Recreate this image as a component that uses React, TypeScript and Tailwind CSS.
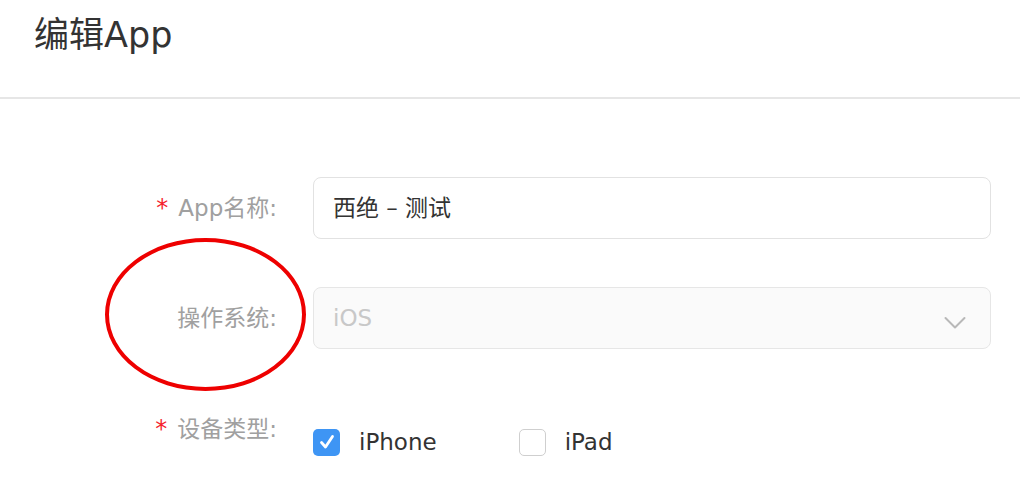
const font = {
  fontFamily: '"DejaVu Sans", "Noto Sans CJK SC", sans-serif',
};

function Checkbox({ checked }: { checked: boolean }) {
  return checked ? (
    <span className="flex h-[27px] w-[27px] items-center justify-center rounded-[5px] bg-[#3e95f4]">
      <svg width="18" height="18" viewBox="0 0 18 18" fill="none">
        <path d="M3.5 9.5 L7.5 14 L14.5 3.5" stroke="white" strokeWidth="2.8" strokeLinecap="round" strokeLinejoin="round" />
      </svg>
    </span>
  ) : (
    <span className="block h-[27px] w-[27px] rounded-[5px] border-[1.5px] border-[#cfcfcf] bg-white" />
  );
}

export default function App() {
  return (
    <div className="relative h-[480px] w-[1020px] overflow-hidden bg-white" style={font}>
      {/* Header */}
      <header className="h-[97px] pl-[34px] pt-[12px]">
        <h1 className="text-[35px] leading-[46px] text-[#333]">编辑App</h1>
      </header>
      <div className="h-[2px] bg-[#e6e6e6]" />

      {/* Form */}
      <div className="flex flex-col pt-[78px] pr-[29px]">
        <div className="flex items-center">
          <label className="w-[277px] shrink-0 text-right text-[23px] text-[#a0a0a0]">
            <span className="mr-[10px] text-[24px] text-[#f5222d]">*</span>App名称:
          </label>
          <div className="ml-[36px] flex h-[62px] flex-1 items-center rounded-[8px] border-[1.5px] border-[#e2e2e2] px-[19px] text-[23px] text-[#333]">
            西绝 – 测试
          </div>
        </div>

        <div className="mt-[48px] flex items-center">
          <label className="w-[277px] shrink-0 text-right text-[23px] text-[#a0a0a0]">操作系统:</label>
          <div className="ml-[36px] flex h-[62px] flex-1 items-center justify-between rounded-[8px] border-[1.5px] border-[#e6e6e6] bg-[#fafafa] pl-[19px] pr-[24px] text-[23px] text-[#c8c8c8]">
            <span>iOS</span>
            <svg width="22" height="14" viewBox="0 0 22 14" fill="none" className="mt-[10px]">
              <path d="M1.5 2 L11 11.5 L20.5 2" stroke="#b8b8b8" strokeWidth="2" strokeLinecap="round" strokeLinejoin="round" />
            </svg>
          </div>
        </div>

        <div className="mt-[66px] flex items-start">
          <label className="w-[277px] shrink-0 text-right text-[23px] leading-[28px] text-[#a0a0a0]">
            <span className="mr-[10px] text-[24px] text-[#f5222d]">*</span>设备类型:
          </label>
          <div className="ml-[36px] mt-[10px] flex items-center">
            <Checkbox checked />
            <span className="ml-[19px] text-[23px] text-[#333]">iPhone</span>
            <span className="ml-[82px]">
              <Checkbox checked={false} />
            </span>
            <span className="ml-[19px] text-[23px] text-[#333]">iPad</span>
          </div>
        </div>
      </div>

      {/* annotation */}
      <div className="pointer-events-none absolute left-[105px] top-[238px] h-[153px] w-[201px] rounded-[50%] border-[4px] border-[#ee0000]" />
    </div>
  );
}
